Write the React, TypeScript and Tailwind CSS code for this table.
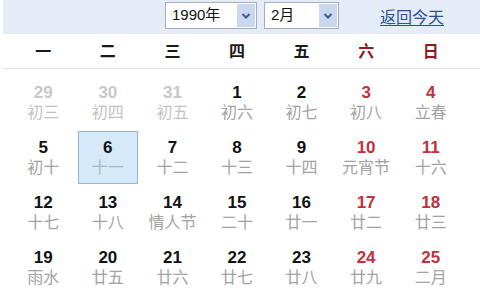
import React from "react";

type Day = {
  n: number;
  lunar: string;
  dim?: boolean;
  red?: boolean;
  selected?: boolean;
};

const weekdays = ["一", "二", "三", "四", "五", "六", "日"];

const days: Day[] = [
  { n: 29, lunar: "初三", dim: true },
  { n: 30, lunar: "初四", dim: true },
  { n: 31, lunar: "初五", dim: true },
  { n: 1, lunar: "初六" },
  { n: 2, lunar: "初七" },
  { n: 3, lunar: "初八", red: true },
  { n: 4, lunar: "立春", red: true },
  { n: 5, lunar: "初十" },
  { n: 6, lunar: "十一", selected: true },
  { n: 7, lunar: "十二" },
  { n: 8, lunar: "十三" },
  { n: 9, lunar: "十四" },
  { n: 10, lunar: "元宵节", red: true },
  { n: 11, lunar: "十六", red: true },
  { n: 12, lunar: "十七" },
  { n: 13, lunar: "十八" },
  { n: 14, lunar: "情人节" },
  { n: 15, lunar: "二十" },
  { n: 16, lunar: "廿一" },
  { n: 17, lunar: "廿二", red: true },
  { n: 18, lunar: "廿三", red: true },
  { n: 19, lunar: "雨水" },
  { n: 20, lunar: "廿五" },
  { n: 21, lunar: "廿六" },
  { n: 22, lunar: "廿七" },
  { n: 23, lunar: "廿八" },
  { n: 24, lunar: "廿九", red: true },
  { n: 25, lunar: "二月", red: true },
];

const Chevron = () => (
  <svg width="10" height="8" viewBox="0 0 10 8">
    <path d="M1.5 2 L5 5.5 L8.5 2" fill="none" stroke="#3d5f96" strokeWidth="2" />
  </svg>
);

const FakeSelect: React.FC<{ label: string; className?: string }> = ({
  label,
  className,
}) => (
  <div
    className={`flex h-[27px] items-center justify-between border border-[#a7adb6] bg-white pl-[6px] pr-[1px] ${className}`}
  >
    <span className="text-[15px] text-[#111]">{label}</span>
    <div className="flex h-[23px] w-[18px] items-center justify-center bg-[#c9d8ef]">
      <Chevron />
    </div>
  </div>
);

export default function App() {
  return (
    <div
      className="h-[300px] w-[480px] overflow-hidden bg-white"
      style={{ fontFamily: '"Liberation Sans", "Noto Sans CJK SC", sans-serif' }}
    >
      {/* top bar */}
      <div className="ml-[3px] flex h-[34px] items-start bg-[#e4ecf8] pt-[2px]">
        <FakeSelect label="1990年" className="ml-[162px] w-[92px]" />
        <FakeSelect label="2月" className="ml-[7px] w-[75px]" />
        <a className="ml-[41px] mt-[4px] text-[16px] text-[#2a4f92] underline underline-offset-2">
          返回今天
        </a>
      </div>

      {/* weekday header */}
      <div className="ml-[3px] h-[35px] border-b border-[#dcdcdc]">
        <div className="ml-[8px] grid h-full w-[452px] grid-cols-7 items-center pt-[1px]">
          {weekdays.map((w, i) => (
            <div
              key={w}
              className={`text-center text-[16px] font-bold ${
                i >= 5 ? "text-[#8e1b1f]" : "text-[#1a1a1a]"
              }`}
            >
              {w}
            </div>
          ))}
        </div>
      </div>

      {/* days */}
      <div className="ml-[11px] mt-[6px] grid w-[452px] grid-cols-7">
        {days.map((d) => (
          <div key={d.n + d.lunar} className="flex h-[55px] items-center justify-center">
            <div
              className={`flex h-[53px] w-[60px] flex-col items-center justify-center border ${
                d.selected
                  ? "border-[#93b3d8] bg-[#d6e9fb]"
                  : "border-transparent"
              }`}
            >
              <span
                className={`text-[17px] font-bold leading-[20px] ${
                  d.dim
                    ? "text-[#c8c8c8]"
                    : d.red
                    ? "text-[#c1303d]"
                    : "text-[#111]"
                }`}
              >
                {d.n}
              </span>
              <span
                className={`text-[16px] leading-[20px] ${
                  d.dim ? "text-[#c2c2c2]" : d.selected ? "text-[#aab5c0]" : "text-[#a2a2a2]"
                }`}
              >
                {d.lunar}
              </span>
            </div>
          </div>
        ))}
      </div>
    </div>
  );
}
